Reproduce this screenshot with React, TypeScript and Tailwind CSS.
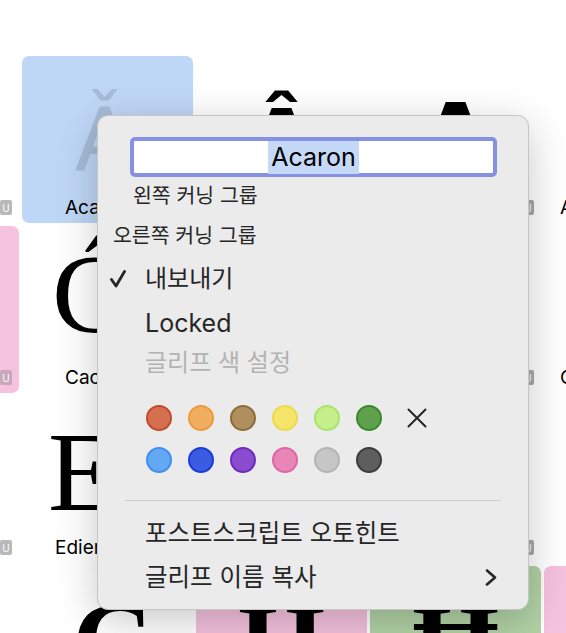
import React from "react";

type CellProps = {
  bg?: string;
  glyph?: string;
  glyphClass?: string;
  label?: string;
  labelClass?: string;
  badge?: boolean;
  badgeClass?: string;
};

function Cell({ bg = "", glyph, glyphClass = "", label, labelClass = "", badge = false, badgeClass = "bg-[#b9b9b9]" }: CellProps) {
  return (
    <div className={`flex h-[167px] flex-col overflow-hidden rounded-[7px] ${bg}`}>
      <div className="h-[136px] overflow-visible">
        {glyph && <div className={`whitespace-nowrap leading-none ${glyphClass}`}>{glyph}</div>}
      </div>
      <div className="flex h-[31px] items-center">
        {label && (
          <span className={`whitespace-nowrap text-[19px] leading-none text-black font-['Inter',sans-serif] ${labelClass}`}>{label}</span>
        )}
        {badge && (
          <span
            className={`ml-auto mr-[7px] flex h-[15px] w-[12px] items-center justify-center rounded-[2px] text-[10px] leading-none text-white font-['Inter',sans-serif] ${badgeClass}`}
          >
            U
          </span>
        )}
      </div>
    </div>
  );
}

const colors: [string, string][] = [
  ["bg-[#d4704f]", "border-[#c34a2b]"],
  ["bg-[#f2ae60]", "border-[#eb9b3e]"],
  ["bg-[#b08f5f]", "border-[#8e6c38]"],
  ["bg-[#f5e56b]", "border-[#efd84a]"],
  ["bg-[#c6ef8b]", "border-[#a9e46a]"],
  ["bg-[#5fa04f]", "border-[#3a8a2b]"],
  ["bg-[#63a8f3]", "border-[#3f8ef0]"],
  ["bg-[#3b5be0]", "border-[#1a3cd8]"],
  ["bg-[#8a4ccf]", "border-[#6c2bbf]"],
  ["bg-[#e886b7]", "border-[#df65a2]"],
  ["bg-[#c6c6c6]", "border-[#b4b4b4]"],
  ["bg-[#5e5e5e]", "border-[#3d3d3d]"],
];

function Dot({ c }: { c: [string, string] }) {
  return <div className={`h-[26px] w-[26px] rounded-full border-2 ${c[0]} ${c[1]}`} />;
}

export default function App() {
  return (
    <div className="relative h-[633px] w-[566px] overflow-hidden bg-white">
      {/* glyph grid */}
      <div className="ml-[-152px] mt-[56px] grid grid-cols-[repeat(5,171px)] auto-rows-[167px] gap-[3px]">
        {/* row 1 */}
        <Cell badge />
        <Cell
          bg="bg-[#bfd7f6]"
          glyph="Ǎ"
          glyphClass="pt-[40px] pr-[6px] text-center text-[88px] text-[#a7bcd8] font-['DejaVu_Sans',sans-serif]"
          label="Acaron"
          labelClass="pl-[43px]"
        />
        <Cell
          glyph="Â"
          glyphClass="pt-[42px] text-center text-[88px] font-bold text-black font-['DejaVu_Sans',sans-serif]"
        />
        <Cell
          glyph="A"
          glyphClass="pt-[36px] text-center text-[88px] font-bold text-black font-['DejaVu_Sans',sans-serif]"
          badge
          badgeClass="bg-[#a9a9a9]"
        />
        <Cell label="Acircumflex" labelClass="pl-[16px]" />
        {/* row 2 */}
        <Cell bg="bg-[#f5c2df]" badge badgeClass="bg-[#c7a7b9]" />
        <Cell
          glyph="Ć"
          glyphClass="pt-[12px] pl-[30px] text-[112px] text-black font-['Liberation_Serif',serif]"
          label="Cacute"
          labelClass="pl-[43px]"
        />
        <Cell />
        <Cell badge badgeClass="bg-[#a9a9a9]" />
        <Cell label="Ccircumflex" labelClass="pl-[16px]" />
        {/* row 3 */}
        <Cell badge />
        <Cell
          glyph="E"
          glyphClass="pt-[20px] pl-[26px] text-[112px] text-black font-['Liberation_Serif',serif]"
          label="Edieresis"
          labelClass="pl-[33px]"
        />
        <Cell />
        <Cell badge badgeClass="bg-[#a9a9a9]" />
        <Cell />
        {/* row 4 */}
        <Cell />
        <Cell
          glyph="C"
          glyphClass="pt-[20px] pl-[50px] text-[112px] font-bold text-black font-['Liberation_Serif',serif]"
        />
        <Cell
          bg="bg-[#f4c1dd]"
          glyph="H"
          glyphClass="pt-[22px] text-center text-[112px] font-bold text-black font-['Liberation_Serif',serif]"
        />
        <Cell
          bg="bg-[#b1d2a5]"
          glyph="Ħ"
          glyphClass="pt-[22px] text-center text-[112px] font-bold text-black font-['Liberation_Serif',serif]"
        />
        <Cell bg="bg-[#f5c2df]" />
      </div>

      {/* context menu */}
      <div className="absolute left-[97px] top-[115px] flex h-[495px] w-[432px] flex-col rounded-[11px] border border-[#c6c6c6] bg-[#ebebeb] text-[#262626] shadow-[0_10px_40px_rgba(0,0,0,0.22)] font-['Inter','Noto_Sans_CJK_KR',sans-serif]">
        <div className="pl-[32px] pt-[21px]">
          <div className="flex h-[40px] w-[367px] items-center justify-center rounded-[5px] border-4 border-[#8791e3] bg-white">
            <span className="h-[33px] bg-[#c3d9f7] px-[3px] text-[25px] leading-[33px] text-black">Acaron</span>
          </div>
        </div>
        <div className="flex h-[38px] items-center pl-[35px] text-[20.5px] leading-none">왼쪽 커닝 그룹</div>
        <div className="flex h-[42px] items-center pl-[15px] text-[20.5px] leading-none">오른쪽 커닝 그룹</div>
        <div className="flex h-[44px] items-center text-[24px] leading-none">
          <svg className="ml-[12px]" width="16" height="18" viewBox="0 0 16 18" fill="none">
            <path d="M1.5 9.5 L6 16 L14.5 1.5" stroke="#262626" strokeWidth="2.8" strokeLinecap="round" strokeLinejoin="round" />
          </svg>
          <span className="ml-[19px]">내보내기</span>
        </div>
        <div className="flex h-[44px] items-center pl-[47px] text-[25px] leading-none">Locked</div>
        <div className="flex h-[36px] items-center pl-[47px] text-[24px] leading-none text-[#b3b3b3]">글리프 색 설정</div>
        <div className="mt-[24px] flex items-center gap-[16px] pl-[48px]">
          {colors.slice(0, 6).map((c, i) => (
            <Dot key={i} c={c} />
          ))}
          <svg className="ml-[9px]" width="20" height="20" viewBox="0 0 20 20" fill="none">
            <path d="M1.5 1.5 L18.5 18.5 M18.5 1.5 L1.5 18.5" stroke="#262626" strokeWidth="2" strokeLinecap="round" />
          </svg>
        </div>
        <div className="mt-[16px] flex items-center gap-[16px] pl-[48px]">
          {colors.slice(6).map((c, i) => (
            <Dot key={i} c={c} />
          ))}
        </div>
        <div className="ml-[27px] mt-[27px] h-px w-[376px] bg-[#cfcfcf]" />
        <div className="mt-[10px] flex h-[44px] items-center pl-[47px] text-[24.5px] leading-none">포스트스크립트 오토힌트</div>
        <div className="flex h-[44px] items-center justify-between pl-[47px] pr-[31px] text-[24.5px] leading-none">
          <span>글리프 이름 복사</span>
          <svg width="12" height="17" viewBox="0 0 12 17" fill="none">
            <path d="M2 1.5 L10 8.5 L2 15.5" stroke="#262626" strokeWidth="2.6" strokeLinecap="round" strokeLinejoin="round" />
          </svg>
        </div>
      </div>
    </div>
  );
}
